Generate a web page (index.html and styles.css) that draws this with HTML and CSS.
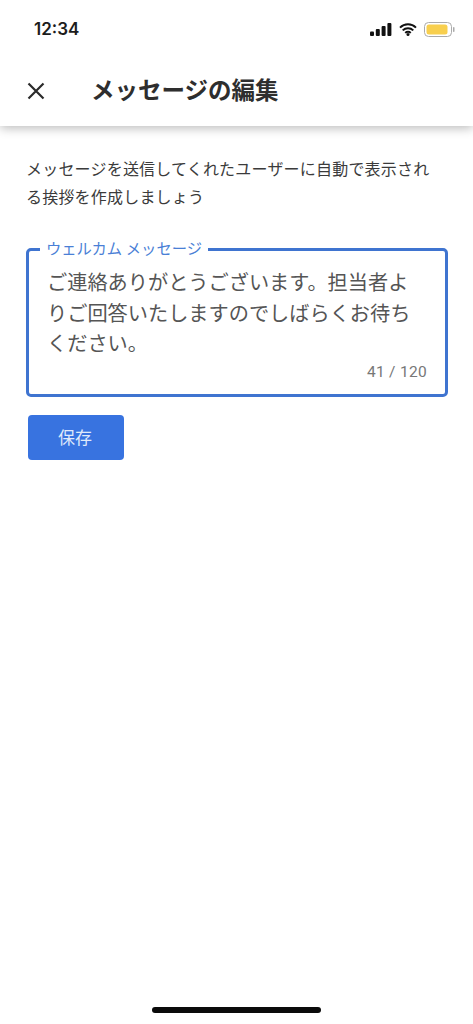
FILE: index.html
```html
<!DOCTYPE html>
<html lang="ja">
<head>
<meta charset="utf-8">
<title>メッセージの編集</title>
<link rel="stylesheet" href="styles.css">
</head>
<body>
<div class="screen">
  <header class="top">
    <div class="status">
      <span class="time">12:34</span>
      <div class="status-icons">
        <svg class="signal" width="22" height="13" viewBox="0 0 22 13"><rect x="0" y="8.5" width="4" height="4.5" rx="1" fill="#111"/><rect x="5.8" y="6" width="4" height="7" rx="1" fill="#111"/><rect x="11.6" y="3" width="4" height="10" rx="1" fill="#111"/><rect x="17.4" y="0" width="4" height="13" rx="1" fill="#111"/></svg>
        <svg class="wifi" width="18" height="13" viewBox="0 0 18 13"><path d="M1 4.6a11.5 11.5 0 0 1 16 0M3.7 7.4a7.6 7.6 0 0 1 10.6 0M6.3 10a3.8 3.8 0 0 1 5.4 0" fill="none" stroke="#111" stroke-width="2"/><circle cx="9" cy="11.5" r="1.5" fill="#111"/></svg>
        <svg class="battery" width="31" height="15" viewBox="0 0 31 15"><rect x="0.5" y="0.5" width="27" height="14" rx="4" fill="none" stroke="#aaa"/><rect x="2.5" y="2.5" width="21" height="10" rx="2.5" fill="#f8cf4e"/><rect x="29" y="5" width="1.5" height="5" rx="0.7" fill="#aaa"/></svg>
      </div>
    </div>
    <div class="bar">
      <svg class="close" width="18" height="18" viewBox="0 0 18 18"><path d="M1.5 1.5 16.5 16.5M16.5 1.5 1.5 16.5" stroke="#2b2b2b" stroke-width="2.2" fill="none"/></svg>
      <h1 class="title">メッセージの編集</h1>
    </div>
  </header>
  <main class="content">
    <p class="intro">メッセージを送信してくれたユーザーに自動で表示される挨拶を作成しましょう</p>
    <fieldset class="field">
      <legend class="label">ウェルカム メッセージ</legend>
      <p class="message">ご連絡ありがとうございます。担当者よりご回答いたしますのでしばらくお待ちください。</p>
      <div class="count">41 / 120</div>
    </fieldset>
    <button class="save" type="button">保存</button>
  </main>
  <div class="home"></div>
</div>
</body>
</html>
```
FILE: styles.css
```css
* { box-sizing: border-box; }
html, body { margin: 0; padding: 0; background: #fff; }
body { font-family: Roboto, "Noto Sans CJK JP", sans-serif; }
.screen { width: 473px; height: 1024px; display: flex; flex-direction: column; overflow: hidden; }
.top { height: 126px; flex: none; box-shadow: 0 2px 10px rgba(0,0,0,.28); background: #fff; }
.status { height: 60px; display: flex; justify-content: space-between; align-items: center; padding: 0 18px 2px 34px; }
.time { font-family: Inter, "Liberation Sans", sans-serif; font-size: 17px; font-weight: 600; color: #1c1c1c; }
.status-icons { display: flex; align-items: center; gap: 7px; }
.bar { display: flex; align-items: center; height: 62px; padding: 0 0 0 27px; gap: 46px; }
.close { flex: none; }
.title { margin: 0; font-size: 23.5px; font-weight: 700; line-height: 32px; color: #2e2e2e; }
.content { flex: 1; padding: 30px 26px 0 26px; display: flex; flex-direction: column; align-items: flex-start; }
.intro { margin: 0; font-size: 16px; letter-spacing: .2px; line-height: 28px; color: #3b3b3b; width: 415px; }
.field { margin: 28px 0 0 0; padding: 0 18px 0 0; width: 422px; height: 157px; border: 3px solid #3f74d0; border-radius: 5px; min-width: 0; }
.label { margin-left: 11px; padding: 0 6px; font-size: 15.3px; line-height: 18px; color: #4a7fd6; }
.message { margin: 10px 0 0 18px; width: 376px; font-size: 20.2px; line-height: 30.7px; color: #555; }
.count { margin-top: 1px; text-align: right; font-size: 15.5px; line-height: 22px; letter-spacing: .3px; color: #777; }
.save { margin: 18px 0 0 2px; padding: 0 6px 3px 4px; width: 96px; height: 45px; border: 0; border-radius: 4px; background: #3873e0; color: #dfe9fb; font-family: inherit; font-size: 17px; }
.home { position: absolute; left: 152px; top: 1007px; width: 169px; height: 6px; border-radius: 3px; background: #0a0a0a; }
```
